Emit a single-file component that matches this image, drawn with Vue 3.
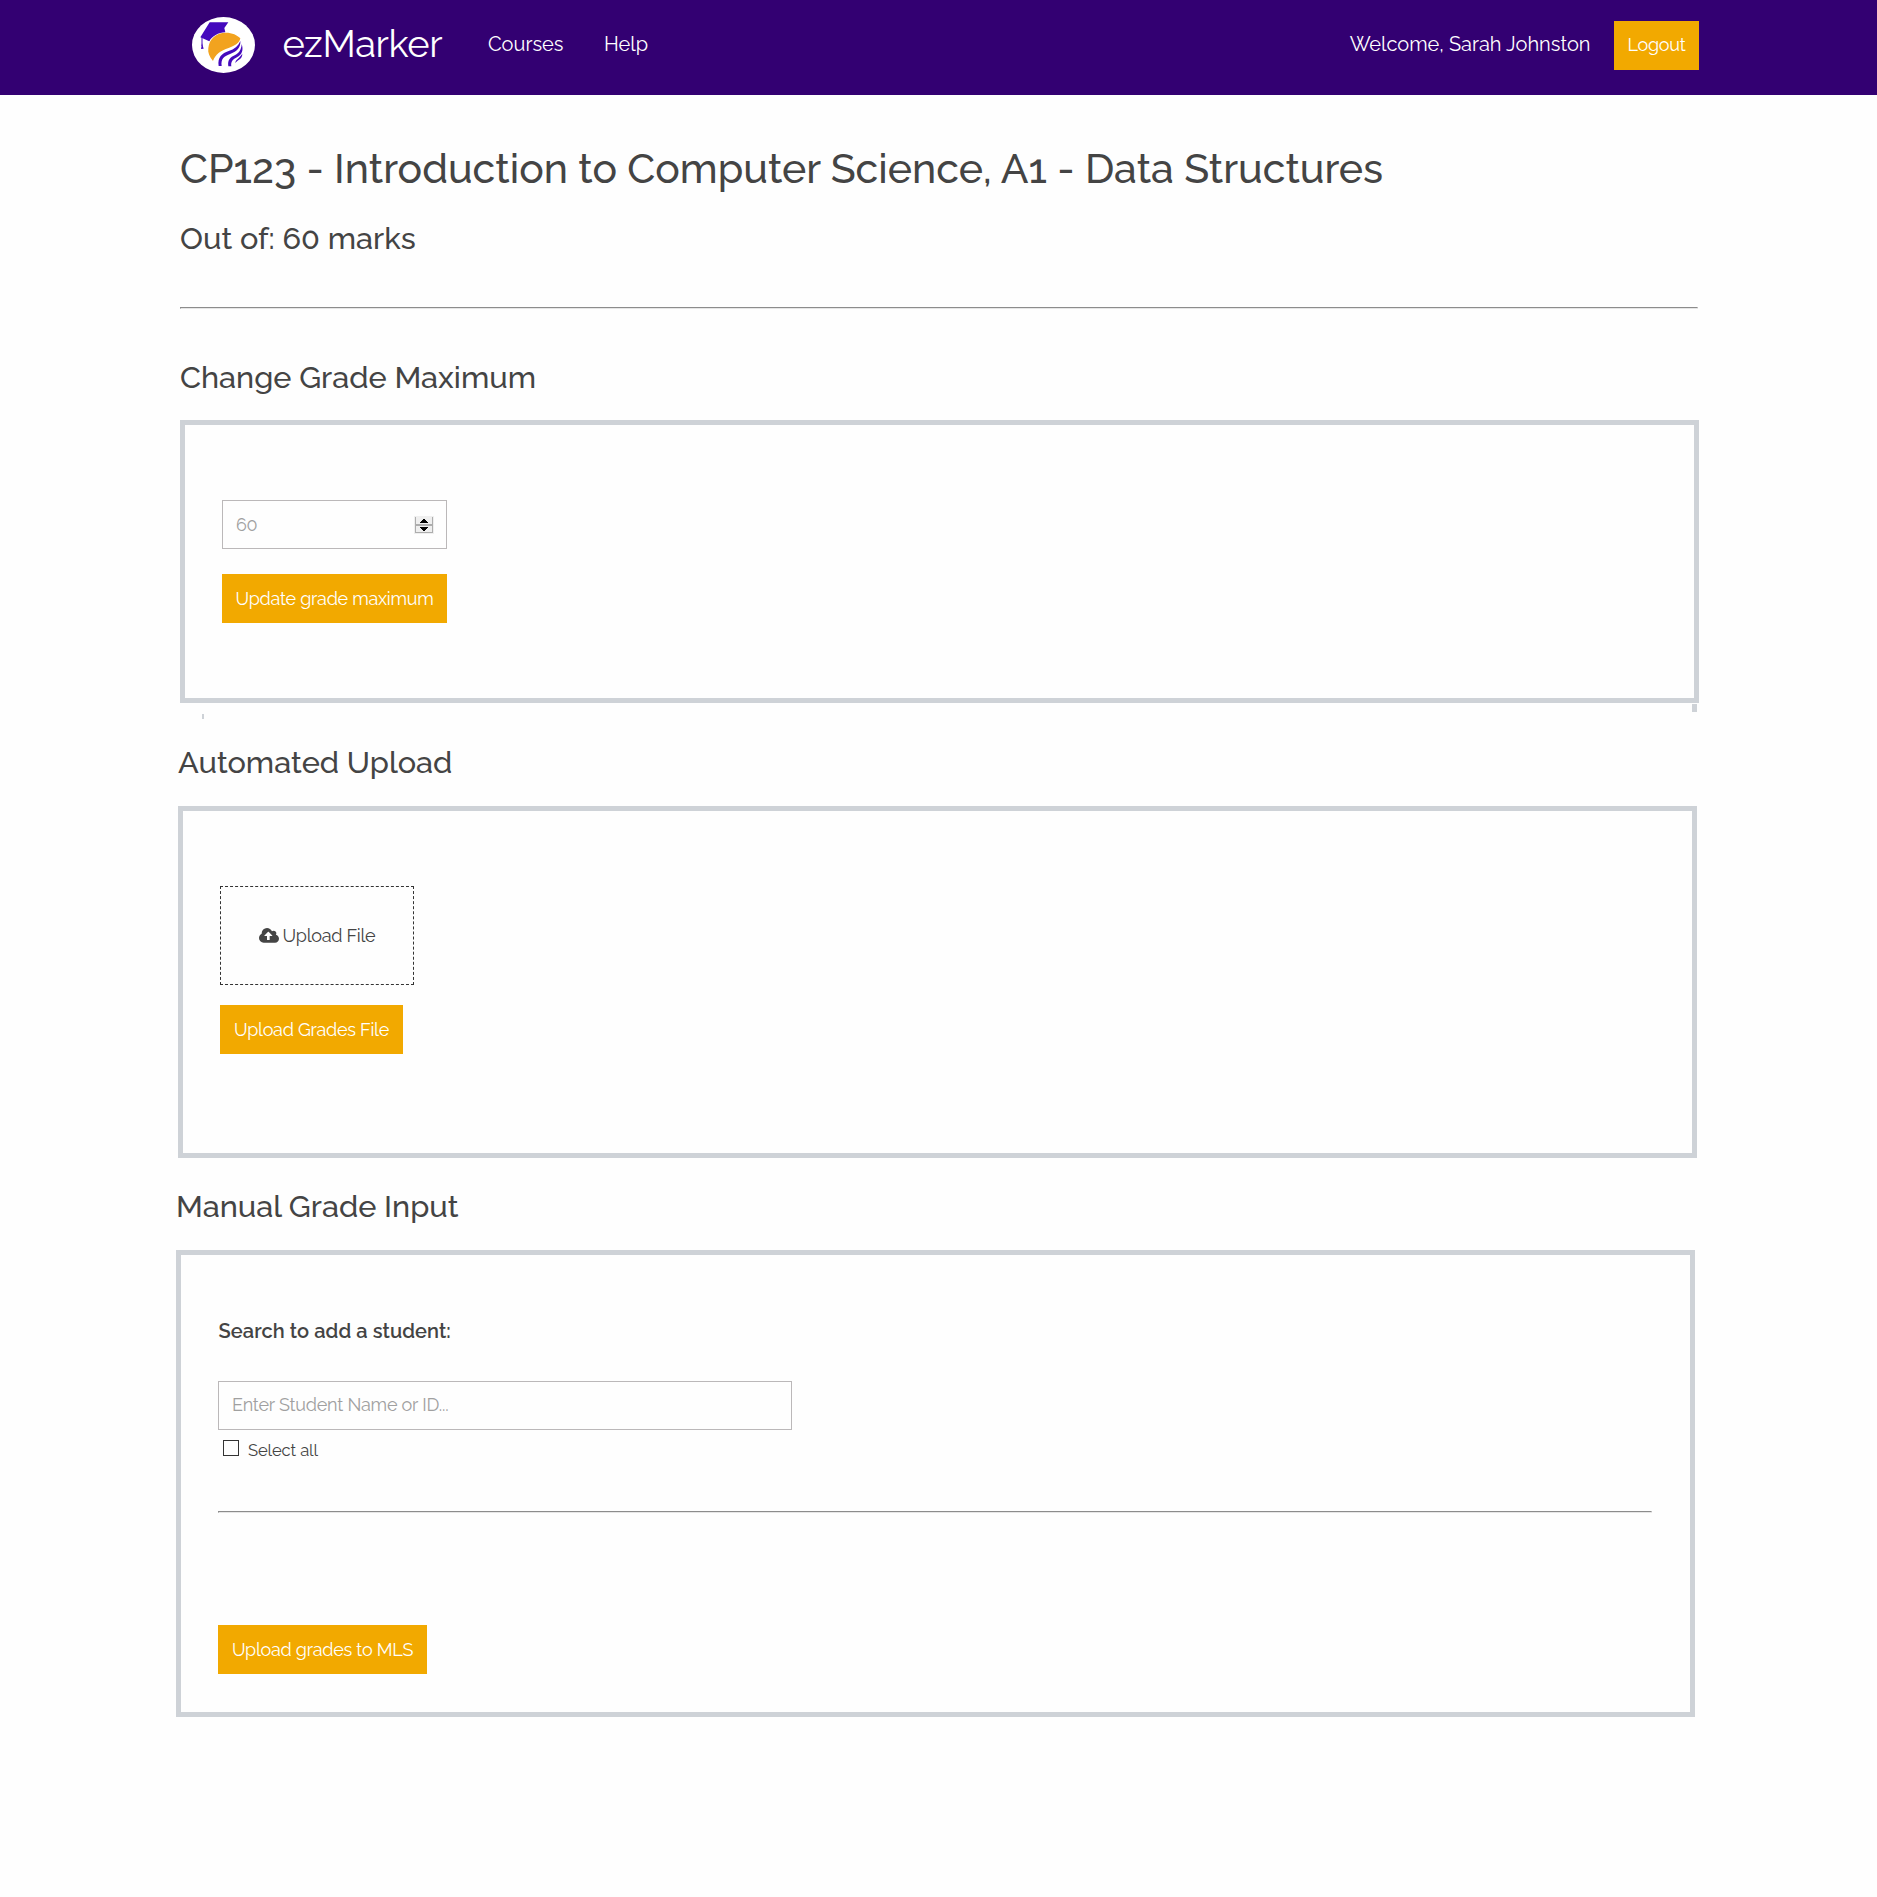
<script setup>
const links = ['Courses', 'Help']
const user = 'Sarah Johnston'
const maximum = 60
</script>

<template>
  <div class="page">
    <header class="topbar">
      <div class="topbar-row">
        <svg class="logo" viewBox="36 51 189 168" width="63" height="56">
          <ellipse cx="130.500" cy="135" rx="94.500" ry="84" fill="#fff" />
          <path d="M89 67H145L133 84L136 97C115 98 96 108 88 124L61 112Z" fill="#4409bd" />
          <path d="M66 112V138" stroke="#4409bd" stroke-width="3" />
          <path d="M66 130L71 146L63 147Z" fill="#4409bd" />
          <path d="M99 183C88 170 83 158 85 144C88 116 108 98 138 98C156 98 172 105 181 115C178 129 166 137 146 144C122 152 105 164 99 183Z" fill="#f2a31f" />
          <path d="M116 198C112 172 126 160 146 153C163 148 175 138 181 123C183 142 170 155 152 161C132 168 122 176 125 198Z" fill="#4409bd" />
          <path d="M145 199C142 179 152 172 164 166C176 160 184 150 185 132C191 150 186 164 172 171C158 178 152 185 154 199Z" fill="#4409bd" />
          <path d="M166 189C166 179 176 177 187 161C187 169 183 176 177 179C172 183 170 184 166 189Z" fill="#4409bd" />
        </svg>
        <a class="brand">ezMarker</a>
        <nav class="nav">
          <a v-for="link in links" :key="link">{{ link }}</a>
        </nav>
        <span class="welcome">Welcome, {{ user }}</span>
        <button class="btn logout">Logout</button>
      </div>
    </header>

    <main>
      <section class="intro">
        <h1>CP123 - Introduction to Computer Science, A1 - Data Structures</h1>
        <h2>Out of: {{ maximum }} marks</h2>
        <hr />
      </section>

      <section class="block grade-max">
        <h2>Change Grade Maximum</h2>
        <div class="card">
          <div class="field number">
            <span>{{ maximum }}</span>
            <svg class="spinner" width="20" height="18" viewBox="0 0 20 18" shape-rendering="crispEdges">
              <rect width="20" height="18" fill="#efefef" />
              <path d="M1 1h1v16h-1zM18 1h1v16h-1zM1 8h18v2h-18zM1 16h18v1h-18z" fill="#adadad" />
              <path d="M9 3h2v1h1v1h1v1h1v1H6v-1h1v-1h1v-1h1zM6 11h8v1h-1v1h-1v1h-1v1h-2v-1h-1v-1h-1v-1h-1z" fill="#000" />
            </svg>
          </div>
          <button class="btn">Update grade maximum</button>
        </div>
        <i class="tick left"></i>
        <i class="tick right"></i>
      </section>

      <section class="block automated">
        <h2>Automated Upload</h2>
        <div class="card">
          <div class="dropzone">
            <svg class="cloud" width="20" height="14" viewBox="0 0 1920 1280">
              <path fill="#444" d="M1280 608q0-14-9-23L919 233q-9-9-23-9t-23 9L522 584q-10 12-10 24 0 14 9 23t23 9h224v352q0 13 9.500 22.500t22.500 9.500h192q13 0 22.500-9.500t9.500-22.500V640h224q13 0 22.500-9.500T1280 608zm640 288q0 159-112.500 271.500T1536 1280H448q-185 0-316.500-131.500T0 832q0-130 70-240t188-165q-2-30-2-43 0-212 150-362T768-128q156 0 285.500 87T1242 190q71-62 166-62 106 0 181 75t75 181q0 76-41 138 130 31 213.500 135.500T1920 896z" />
            </svg>
            <span>Upload File</span>
          </div>
          <button class="btn">Upload Grades File</button>
        </div>
      </section>

      <section class="block manual">
        <h2>Manual Grade Input</h2>
        <div class="card">
          <label class="search-label">Search to add a student:</label>
          <div class="field search"><span>Enter Student Name or ID...</span></div>
          <div class="select-all"><i class="box"></i><span>Select all</span></div>
          <hr />
          <button class="btn">Upload grades to MLS</button>
        </div>
      </section>
    </main>
  </div>
</template>

<style>
body {
  background: #fefefe;
}
</style>

<style scoped>
.page {
  font-family: Raleway, 'Open Sans', sans-serif;
  font-weight: 400;
  color: #444;
  min-height: 1897px;
}
.topbar {
  background: #330072;
  height: 95px;
  color: #fff;
}
.topbar-row {
  display: flex;
  align-items: center;
  height: 88px;
  width: 1507px;
  margin-left: 192px;
}
.logo {
  margin-top: 2px;
}
.brand {
  margin-left: 27.4px;
  width: 205.5px;
  font-size: 38px;
  line-height: 40px;
  letter-spacing: -0.35px;
}
.nav {
  display: flex;
  gap: 40.4px;
  font-size: 20px;
  line-height: 24px;
}
.nav a {
  white-space: nowrap;
}
.welcome {
  margin-left: auto;
  font-size: 20px;
  line-height: 24px;
}
.btn {
  display: block;
  box-sizing: border-box;
  height: 49px;
  padding: 0;
  border: 0;
  background: #f2a900;
  color: #fff;
  font: inherit;
  font-size: 18px;
  line-height: 24px;
  letter-spacing: -0.26px;
  text-align: center;
  white-space: nowrap;
}
.logout {
  width: 85px;
  margin: 3px 0 0 23.5px;
  padding-bottom: 2px;
  letter-spacing: -0.3px;
}
h1,
h2 {
  margin: 0;
  font-weight: 500;
  white-space: nowrap;
}
h1 {
  font-size: 41px;
  line-height: 48px;
}
h2 {
  font-size: 30.7px;
  line-height: 36px;
}
hr {
  height: 0;
  margin: 0;
  border: 1px solid;
  border-color: #8c8c8c #e6e6e6 #e6e6e6 #8c8c8c;
}
.intro {
  width: 1518px;
  margin-left: 180px;
  padding-top: 50px;
}
.intro h2 {
  margin: 27px 0 51px;
}
.block {
  width: 1519px;
}
.card {
  box-sizing: border-box;
  margin-top: 26px;
  border: 5px solid #ced2d7;
  padding: 75px 37px 0;
}
.grade-max {
  position: relative;
  margin: 50px 0 0 180px;
}
.grade-max .card {
  height: 283px;
  margin-top: 25px;
}
.automated {
  margin: 41px 0 0 178px;
}
.automated .card {
  height: 352px;
}
.manual {
  margin: 30px 0 0 176px;
}
.manual .card {
  height: 467px;
  padding-top: 64px;
}
.field {
  display: flex;
  align-items: center;
  box-sizing: border-box;
  height: 49px;
  padding: 0 12px 0 13px;
  border: 1px solid #bbb8b9;
  color: #a0a0a0;
  font-size: 18px;
}
.number {
  justify-content: space-between;
  width: 225px;
  letter-spacing: -0.4px;
}
.grade-max .btn {
  width: 225px;
  margin-top: 25px;
}
.tick {
  position: absolute;
  background: #ced2d7;
}
.tick.left {
  left: 22px;
  top: 355px;
  width: 2px;
  height: 5px;
}
.tick.right {
  left: 1512px;
  top: 345px;
  width: 5px;
  height: 8px;
}
.dropzone {
  display: flex;
  align-items: center;
  justify-content: center;
  gap: 4px;
  box-sizing: border-box;
  width: 194px;
  height: 99px;
  border: 1px dashed #333;
  font-size: 18px;
  letter-spacing: -0.27px;
}
.cloud {
  overflow: visible;
}
.automated .btn {
  width: 183px;
  margin-top: 20px;
}
.search-label {
  display: block;
  padding-left: 0.5px;
  font-size: 20px;
  line-height: 24px;
  font-weight: 600;
  letter-spacing: 0.08px;
}
.search {
  width: 574px;
  margin-top: 38px;
  padding-bottom: 2px;
  letter-spacing: -0.22px;
}
.select-all {
  display: flex;
  height: 20px;
  margin-top: 10px;
  padding-left: 5px;
  font-size: 16.6px;
  line-height: 20px;
  letter-spacing: -0.12px;
}
.box {
  box-sizing: border-box;
  width: 16px;
  height: 16px;
  margin-right: 9px;
  border: 1px solid #333;
}
.manual hr {
  width: 1432px;
  margin-top: 51px;
}
.manual .btn {
  width: 209px;
  margin-top: 112px;
}
</style>
